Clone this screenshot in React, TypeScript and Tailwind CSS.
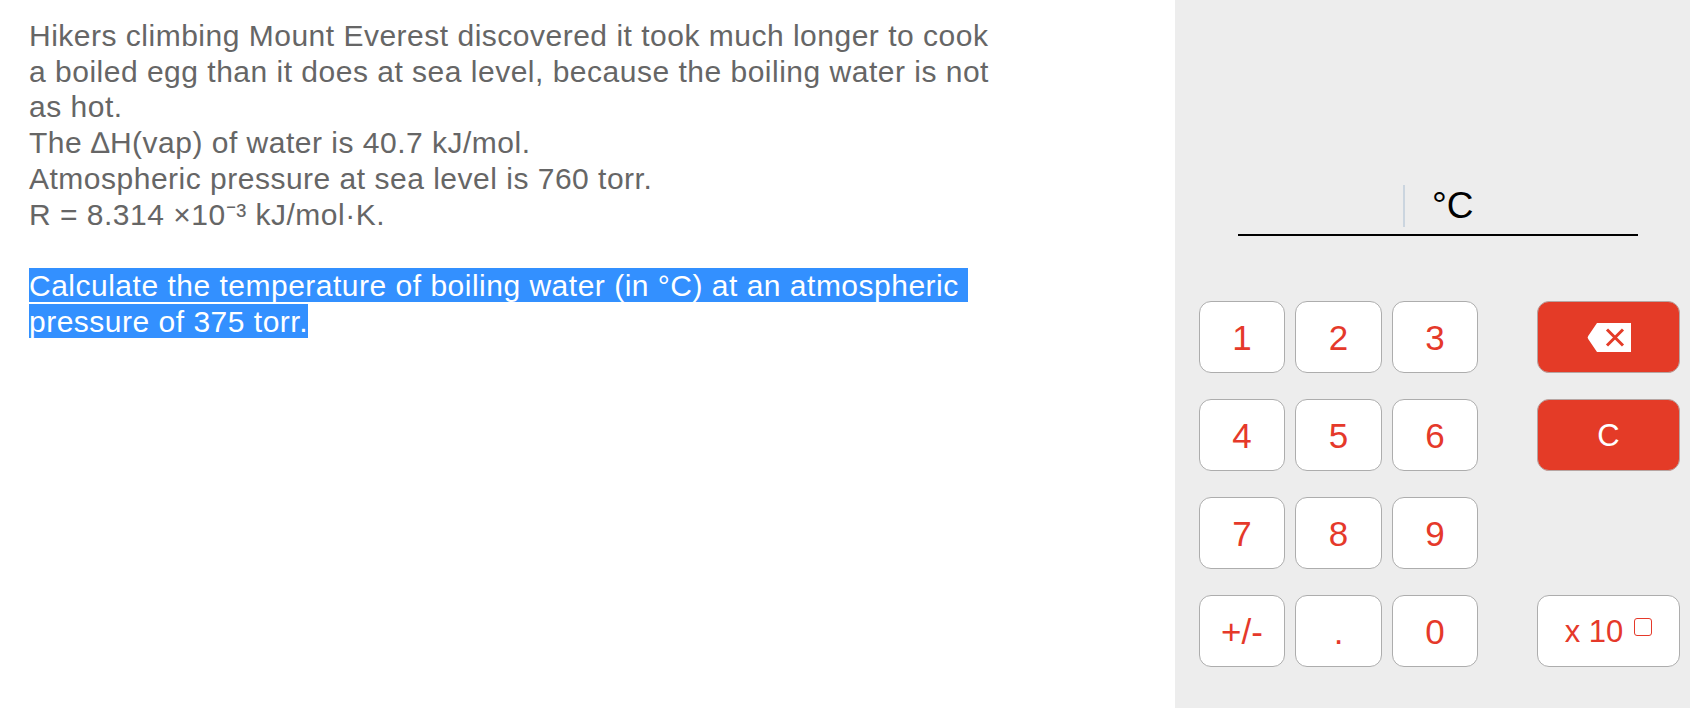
import React from "react";

const digitKeys = ["1", "2", "3", "4", "5", "6", "7", "8", "9", "+/-", ".", "0"];

function Key({ label }: { label: string }) {
  return (
    <button className="h-[72px] flex items-center justify-center bg-white border border-[#adadad] rounded-[12px] text-[#e5392a] text-[35px] leading-none">
      {label}
    </button>
  );
}

export default function App() {
  return (
    <div className="flex w-[1690px] h-[708px] bg-white font-['Liberation_Sans',Arial,sans-serif]">
      {/* question text */}
      <div className="w-[1175px] pl-[29px] pt-[18px]">
        <p className="w-[975px] text-[30px] leading-[35.7px] tracking-[0.5px] text-[#666666]">
          Hikers climbing Mount Everest discovered it took much longer to cook a boiled egg than it does at sea
          level, because the boiling water is not as hot.
          <br />
          The ∆H(vap) of water is 40.7 kJ/mol.
          <br />
          Atmospheric pressure at sea level is 760 torr.
          <br />
          R = 8.314 ×10⁻³ kJ/mol·K.
          <br />
          <br />
          <span className="bg-[#3390ff] text-white py-[0.5px]">
            Calculate the temperature of boiling water (in °C) at an atmospheric{"\u00a0"} pressure of 375 torr.
          </span>
        </p>
      </div>

      {/* answer panel */}
      <div className="flex-1 bg-[#ededed] pt-[185px]">
        <div className="ml-[63px] w-[400px]">
          <div className="h-[42px] flex items-center">
            <div className="w-[165px]" />
            <div className="w-[2px] h-[42px] bg-[#cbd5df]" />
            <span className="ml-[27px] text-[37px] leading-[42px] text-black">°C</span>
          </div>
          <div className="mt-[7px] h-[2px] bg-black" />
        </div>

        <div className="mt-[65px] ml-[24px] grid grid-cols-[86px_87px_86px_39px_143px] grid-rows-[72px_72px_72px_72px] gap-x-[10px] gap-y-[26px]">
          {digitKeys.slice(0, 3).map((k) => (
            <Key key={k} label={k} />
          ))}
          <div />
          <button className="h-[72px] flex items-center justify-center bg-[#e43b27] border border-[#b7a5a2] rounded-[12px]">
            <svg width="44" height="29" viewBox="0 0 44 29">
              <path d="M10 0 H44 V29 H10 L1.2 16 Q0 14.5 1.2 13 Z" fill="#ffffff" />
              <path d="M20 6.5 L36 22.5 M36 6.5 L20 22.5" stroke="#e43b27" strokeWidth="3" />
            </svg>
          </button>

          {digitKeys.slice(3, 6).map((k) => (
            <Key key={k} label={k} />
          ))}
          <div />
          <button className="h-[72px] flex items-center justify-center bg-[#e43b27] border border-[#b7a5a2] rounded-[12px] text-white text-[31px] leading-none">
            C
          </button>

          {digitKeys.slice(6, 9).map((k) => (
            <Key key={k} label={k} />
          ))}
          <div />
          <div />

          {digitKeys.slice(9, 12).map((k) => (
            <Key key={k} label={k} />
          ))}
          <div />
          <button className="h-[72px] flex items-center justify-center bg-white border border-[#adadad] rounded-[12px] text-[#e5392a] text-[31px] leading-none">
            <span>x 10</span>
            <span className="ml-[11px] -mt-[9px] w-[18px] h-[18px] border-[1.5px] border-[#e5392a] rounded-[3px]" />
          </button>
        </div>
      </div>
    </div>
  );
}
